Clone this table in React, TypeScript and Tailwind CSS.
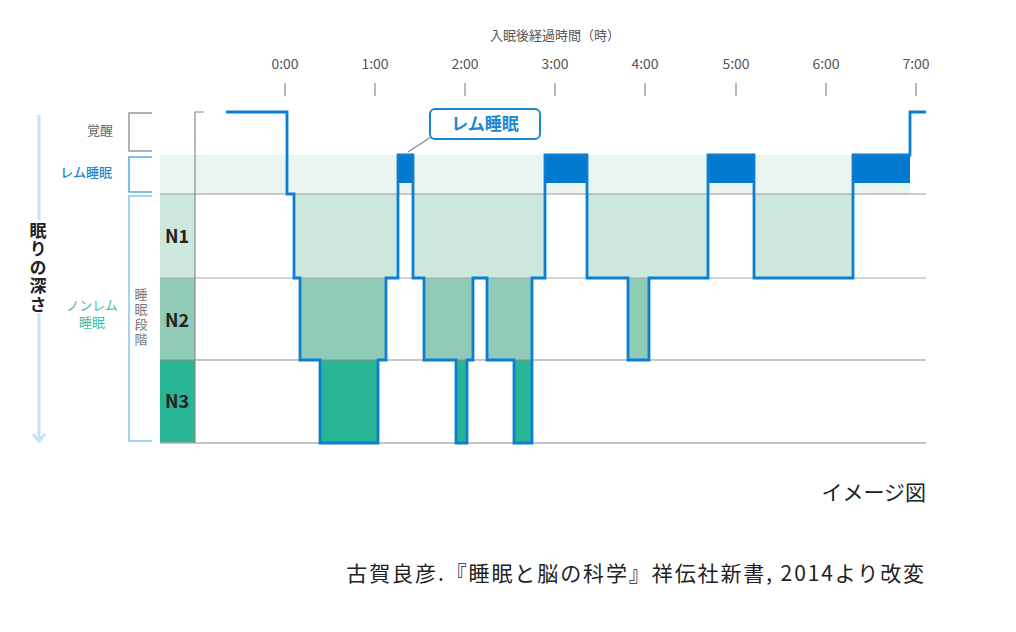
import React from "react";

const FONT = '"Noto Sans CJK JP", "Noto Sans", sans-serif';

const BLUE = "#0d7fd3";
const REM_DARK = "#0079cf";
const REM_BAND = "#eaf4f1";
const N1 = "#cce8dc";
const N2 = "#8fcbb6";
const N3 = "#27b595";

// y levels
const Y = { wake: 112, remTop: 155, remBottom: 183, n1Top: 194, n1: 278, n2: 360, n3: 443 };

const ticks = [
  { x: 285, label: "0:00" },
  { x: 375, label: "1:00" },
  { x: 465, label: "2:00" },
  { x: 555, label: "3:00" },
  { x: 645, label: "4:00" },
  { x: 736, label: "5:00" },
  { x: 826, label: "6:00" },
  { x: 916, label: "7:00" },
];

const n1Fill = [
  [294, 398],
  [413, 545],
  [587, 708],
  [754, 853],
];
const n2Fill = [
  [300, 386],
  [424, 473],
  [487, 532],
  [628, 649],
];
const n3Fill = [
  [320, 378],
  [456, 467],
  [514, 532],
];
const remFill = [
  [398, 413],
  [545, 587],
  [708, 754],
  [853, 910],
];

const hypnogram =
  "M226,112 H287 V194 H294 V278 H300 V360 H320 V443 H378 V360 H386 V278 H398 V155 H413 V278 H424 V360 H456 V443 H467 V360 H473 V278 H487 V360 H514 V443 H532 V278 H545 V155 H587 V278 H628 V360 H649 V278 H708 V155 H754 V278 H853 V155 H910 V112 H926";

// vertical (tategaki) label
function Column({ text, x, y, size, weight, fill, spacing }: { text: string; x: number; y: number; size: number; weight: number; fill: string; spacing: number }) {
  return (
    <text
      x={x}
      y={y}
      fontSize={size}
      fontWeight={weight}
      fill={fill}
      letterSpacing={spacing}
      style={{ writingMode: "vertical-rl" }}
    >
      {text}
    </text>
  );
}

function SleepChart() {
  return (
    <svg width={1016} height={460} viewBox="0 0 1016 460" className="block" fontFamily={FONT}>
      {/* axis */}
      <text x={555} y={40} fontSize={13} fill="#555" textAnchor="middle">
        入眠後経過時間（時）
      </text>
      {ticks.map((t) => (
        <g key={t.label}>
          <text x={t.x} y={69} fontSize={14} fill="#555" textAnchor="middle">
            {t.label}
          </text>
          <line x1={t.x} y1={83} x2={t.x} y2={96} stroke="#888" strokeWidth={1.2} />
        </g>
      ))}

      {/* bands and swatches */}
      <rect x={160} y={Y.remTop} width={750} height={Y.n1Top - Y.remTop} fill={REM_BAND} />
      <rect x={160} y={Y.n1Top} width={35} height={Y.n1 - Y.n1Top} fill={N1} />
      <rect x={160} y={Y.n1} width={35} height={Y.n2 - Y.n1} fill={N2} />
      <rect x={160} y={Y.n2} width={35} height={Y.n3 - Y.n2} fill={N3} />

      {n1Fill.map(([a, b]) => (
        <rect key={a} x={a} y={Y.n1Top} width={b - a} height={Y.n1 - Y.n1Top} fill={N1} />
      ))}
      {n2Fill.map(([a, b]) => (
        <rect key={a} x={a} y={Y.n1} width={b - a} height={Y.n2 - Y.n1} fill={N2} />
      ))}
      {n3Fill.map(([a, b]) => (
        <rect key={a} x={a} y={Y.n2} width={b - a} height={Y.n3 - Y.n2} fill={N3} />
      ))}
      {remFill.map(([a, b]) => (
        <rect key={a} x={a} y={Y.remTop} width={b - a} height={Y.remBottom - Y.remTop} fill={REM_DARK} />
      ))}

      {/* grid */}
      <line x1={160} y1={194} x2={926} y2={194} stroke="#9a9a9a" strokeWidth={1.2} />
      <line x1={160} y1={278} x2={926} y2={278} stroke="#a5a5a5" strokeWidth={1.2} />
      <line x1={160} y1={360} x2={926} y2={360} stroke="#8f8f8f" strokeWidth={1.2} />
      <line x1={160} y1={443} x2={926} y2={443} stroke="#b0b0b0" strokeWidth={1.6} />
      <path d="M204,112 H195 V443" fill="none" stroke="#8a8a8a" strokeWidth={1.2} />

      {/* stage labels */}
      <text x={177} y={243} fontSize={18} fontWeight={700} fill="#222" textAnchor="middle">N1</text>
      <text x={177} y={327} fontSize={18} fontWeight={700} fill="#222" textAnchor="middle">N2</text>
      <text x={177} y={408} fontSize={18} fontWeight={700} fill="#222" textAnchor="middle">N3</text>

      {/* hypnogram */}
      <path d={hypnogram} fill="none" stroke={BLUE} strokeWidth={2.8} strokeLinejoin="miter" />

      {/* callout */}
      <line x1={408} y1={152} x2={431} y2={137} stroke="#888" strokeWidth={1.2} />
      <rect x={430} y={109} width={110} height={30} rx={5} fill="#fff" stroke="#1a88d0" strokeWidth={2} />
      <text x={485} y={130} fontSize={17} fontWeight={700} fill="#1a88d0" textAnchor="middle">
        レム睡眠
      </text>

      {/* left labels */}
      <text x={113} y={135} fontSize={13} fill="#666" textAnchor="end">覚醒</text>
      <text x={112} y={177} fontSize={13} fontWeight={500} fill="#1f87cc" textAnchor="end">レム睡眠</text>
      <text x={92} y={310} fontSize={13} fill="#3dbd98" textAnchor="middle">ノンレム</text>
      <text x={92} y={327} fontSize={13} fill="#3dbd98" textAnchor="middle">睡眠</text>

      <path d="M152,113 H129 V151 H152" fill="none" stroke="#999" strokeWidth={1.5} />
      <path d="M152,157 H129 V192 H152" fill="none" stroke="#5aaae0" strokeWidth={1.5} />
      <path d="M152,196 H129 V441 H152" fill="none" stroke="#86c3ea" strokeWidth={1.5} />
      <Column text="睡眠段階" x={141} y={288} size={13} weight={400} fill="#777" spacing={2} />

      {/* depth arrow */}
      <line x1={39} y1={115} x2={39} y2={440} stroke="#c5e3f5" strokeWidth={3} />
      <polyline points="33,434 39,441 45,434" fill="none" stroke="#c5e3f5" strokeWidth={3} />
      <rect x={28} y={220} width={22} height={93} fill="#fff" />
      <Column text="眠りの深さ" x={38} y={222} size={17} weight={700} fill="#222" spacing={1.5} />
    </svg>
  );
}

export default function App() {
  return (
    <div className="w-[1016px] h-[632px] bg-white flex flex-col" style={{ fontFamily: FONT }}>
      <SleepChart />
      <div className="flex flex-col items-end pr-[90px] text-[21px] leading-none text-[#222]">
        <p className="mt-[21px]">イメージ図</p>
        <p className="mt-[60px] tracking-[1.9px]">古賀良彦.『睡眠と脳の科学』祥伝社新書, 2014より改変</p>
      </div>
    </div>
  );
}
